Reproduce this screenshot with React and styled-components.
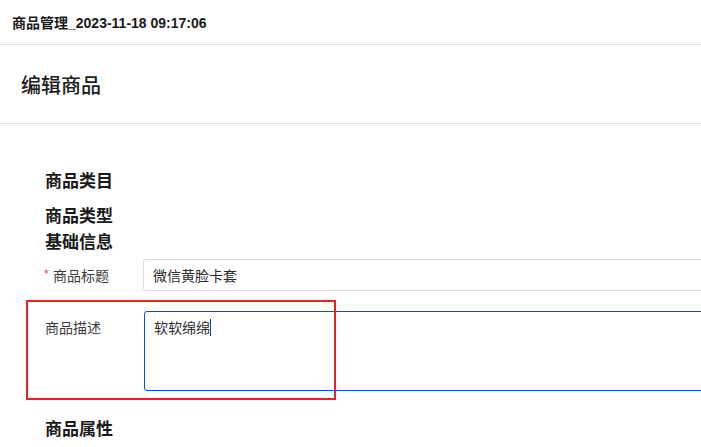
import React from "react";
import styled, { createGlobalStyle } from "styled-components";

const Global = createGlobalStyle`
  html, body {
    margin: 0;
    padding: 0;
    overflow: hidden;
    background: #fff;
  }
  body {
    font-family: "Liberation Sans", "Noto Sans CJK SC", sans-serif;
    color: #1a1a1a;
  }
`;

const Page = styled.div`
  width: 100%;
  overflow: hidden;
`;

const TopBar = styled.div`
  height: 45px;
  box-sizing: border-box;
  padding: 0 0 1px 12px;
  display: flex;
  align-items: center;
  border-bottom: 1px solid #e3e3e3;
  font-size: 14px;
  font-weight: 700;
  color: #1a1a1a;
`;

const TitleBar = styled.div`
  height: 79px;
  box-sizing: border-box;
  padding-left: 21px;
  display: flex;
  align-items: center;
  border-bottom: 1px solid #e3e3e3;
  font-size: 20px;
  font-weight: 500;
  color: #1a1a1a;
`;

const Content = styled.div`
  padding: 46px 0 0 45px;
`;

const SectionTitle = styled.div`
  font-size: 17px;
  line-height: 24px;
  font-weight: 700;
  color: #1a1a1a;
  margin-top: ${p => p.$top || 0}px;
  margin-bottom: ${p => p.$gap || 0}px;
`;

const Row = styled.div`
  position: relative;
  display: flex;
  align-items: flex-start;
  margin-top: ${p => p.$top || 0}px;
`;

const Label = styled.div`
  width: 99px;
  flex: none;
  height: 32px;
  display: flex;
  align-items: center;
  font-size: 14px;
  color: #3a3a3a;
  margin-left: ${p => (p.$required ? -1 : 0)}px;
`;

const Star = styled.span`
  color: #e34d59;
  font-size: 12px;
  width: 9px;
  margin-top: -2px;
`;

const Input = styled.div`
  width: 640px;
  flex: none;
  height: 32px;
  box-sizing: border-box;
  border: 1px solid #dcdcdc;
  border-radius: 3px;
  padding: 0 9px;
  display: flex;
  align-items: center;
  font-size: 14px;
  color: #2b2b2b;
`;

const TextArea = styled.div`
  width: 640px;
  flex: none;
  height: 80px;
  box-sizing: border-box;
  border: 1px solid #0052d9;
  border-radius: 3px;
  padding: 5px 9px;
  font-size: 14px;
  line-height: 22px;
  color: #2b2b2b;
`;

const Caret = styled.span`
  display: inline-block;
  width: 1px;
  height: 17px;
  background: #1f3f8f;
  vertical-align: -3px;
`;

const Highlight = styled.div`
  position: absolute;
  left: -19px;
  top: -11px;
  width: 310px;
  height: 100px;
  box-sizing: border-box;
  border: 2px solid #e8201f;
  pointer-events: none;
`;

export default function App() {
  return (
    <Page>
      <Global />
      <TopBar>商品管理_2023-11-18 09:17:06</TopBar>
      <TitleBar>编辑商品</TitleBar>
      <Content>
        <SectionTitle $gap={11}>商品类目</SectionTitle>
        <SectionTitle $gap={2}>商品类型</SectionTitle>
        <SectionTitle>基础信息</SectionTitle>
        <Row $top={4}>
          <Label $required>
            <Star>*</Star>商品标题
          </Label>
          <Input>微信黄脸卡套</Input>
        </Row>
        <Row $top={20}>
          <Label>商品描述</Label>
          <TextArea>
            软软绵绵<Caret />
          </TextArea>
          <Highlight />
        </Row>
        <SectionTitle $top={27}>商品属性</SectionTitle>
      </Content>
    </Page>
  );
}
